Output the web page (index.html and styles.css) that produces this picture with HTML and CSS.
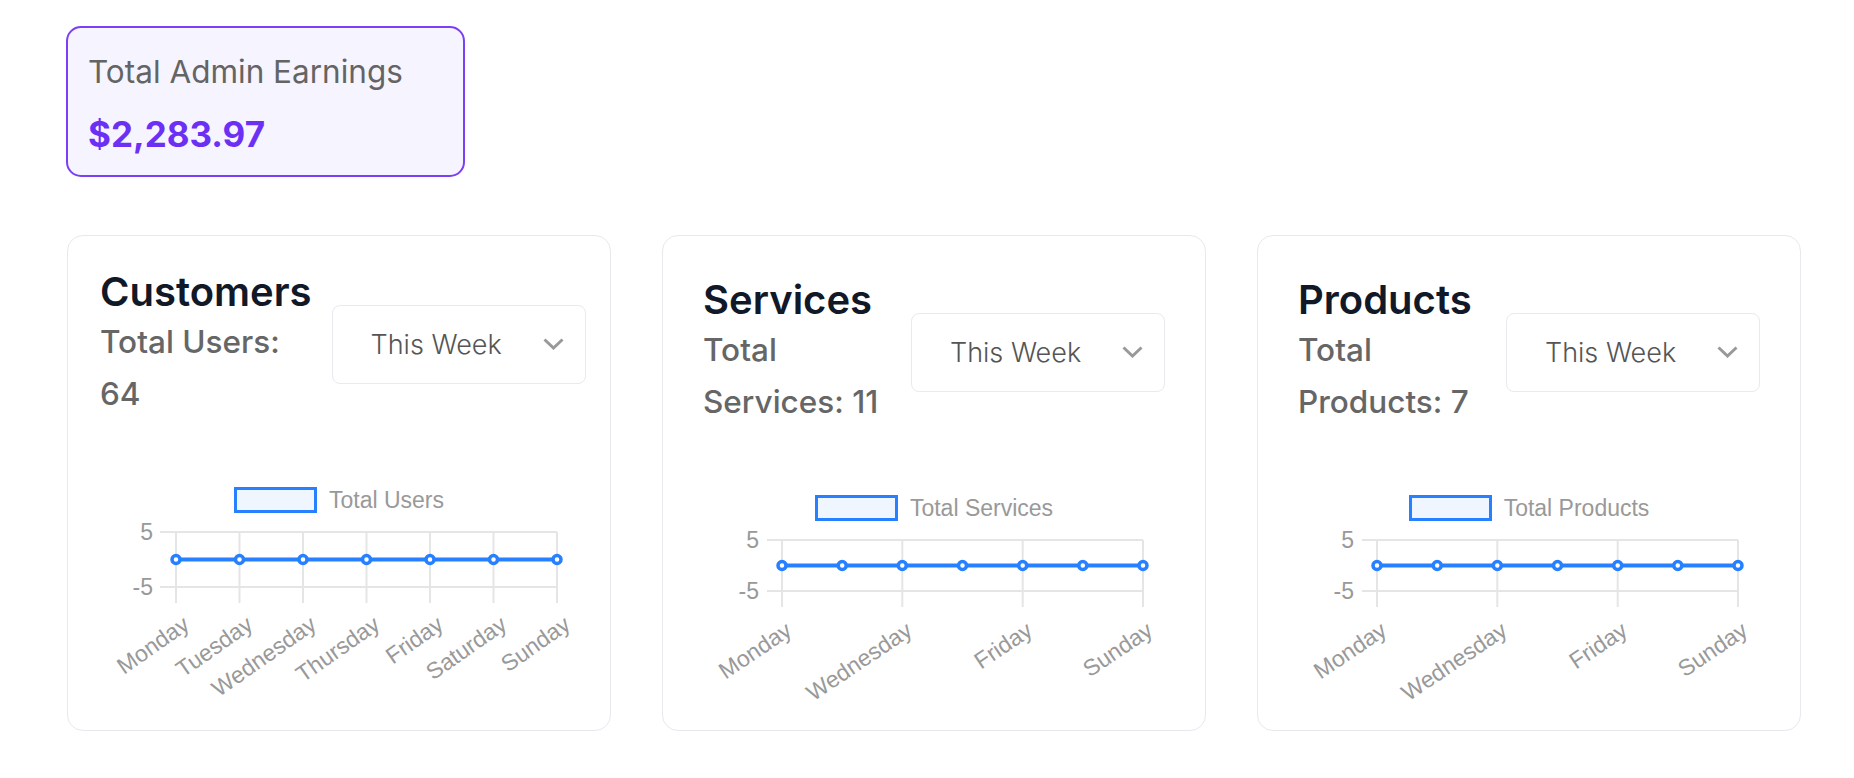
FILE: index.html
```html
<!DOCTYPE html>
<html lang="en">
<head>
  <meta charset="UTF-8">
  <title>Admin Dashboard</title>
  <meta name="viewport" content="width=device-width, initial-scale=1.0">
  <link rel="stylesheet" href="styles.css">
</head>
<body>

  <main class="dashboard">

    <!-- Earnings -->
    <div class="earnings-card">
      <p class="earnings-label">Total Admin Earnings</p>
      <p class="earnings-value">$2,283.97</p>
    </div>

    <section class="stats-grid">

      <!-- Customers -->
      <div class="stat-card stat-card--compact">
        <div class="stat-head">
          <div class="stat-info">
            <h2>Customers</h2>
            <p class="stat-total">Total Users: 64</p>
          </div>
          <div class="period-select">
            <select>
              <option>This Week</option>
              <option>This Month</option>
              <option>This Year</option>
            </select>
            <svg class="chevron" viewBox="0 0 21 12"><polyline points="1.5,1.5 10.5,10 19.5,1.5"/></svg>
          </div>
        </div>
        <div class="chart-legend"><span class="legend-box"></span><span>Total Users</span></div>
        <svg class="chart" width="478" height="130">
          <text class="tick-y" x="53" y="19">5</text>
          <text class="tick-y" x="53" y="74">-5</text>
          <line class="grid" x1="60" y1="19" x2="457" y2="19"/>
          <line class="grid" x1="60" y1="74" x2="457" y2="74"/>
          <line class="grid" x1="76" y1="19" x2="76" y2="90"/>
          <line class="grid" x1="139.5" y1="19" x2="139.5" y2="90"/>
          <line class="grid" x1="203" y1="19" x2="203" y2="90"/>
          <line class="grid" x1="266.5" y1="19" x2="266.5" y2="90"/>
          <line class="grid" x1="330" y1="19" x2="330" y2="90"/>
          <line class="grid" x1="393.5" y1="19" x2="393.5" y2="90"/>
          <line class="grid" x1="457" y1="19" x2="457" y2="90"/>
          <line class="data-line" x1="76" y1="46.5" x2="457" y2="46.5"/>
          <circle class="point" cx="76" cy="46.5" r="4"/>
          <circle class="point" cx="139.5" cy="46.5" r="4"/>
          <circle class="point" cx="203" cy="46.5" r="4"/>
          <circle class="point" cx="266.5" cy="46.5" r="4"/>
          <circle class="point" cx="330" cy="46.5" r="4"/>
          <circle class="point" cx="393.5" cy="46.5" r="4"/>
          <circle class="point" cx="457" cy="46.5" r="4"/>
          <text class="tick-x" transform="translate(87.5 110) rotate(-35)">Monday</text>
          <text class="tick-x" transform="translate(151 110) rotate(-35)">Tuesday</text>
          <text class="tick-x" transform="translate(214.5 110) rotate(-35)">Wednesday</text>
          <text class="tick-x" transform="translate(278 110) rotate(-35)">Thursday</text>
          <text class="tick-x" transform="translate(341.5 110) rotate(-35)">Friday</text>
          <text class="tick-x" transform="translate(405 110) rotate(-35)">Saturday</text>
          <text class="tick-x" transform="translate(468.5 110) rotate(-35)">Sunday</text>
        </svg>
      </div>

      <!-- Services -->
      <div class="stat-card">
        <div class="stat-head">
          <div class="stat-info">
            <h2>Services</h2>
            <p class="stat-total">Total <span class="keep">Services: 11</span></p>
          </div>
          <div class="period-select">
            <select>
              <option>This Week</option>
              <option>This Month</option>
              <option>This Year</option>
            </select>
            <svg class="chevron" viewBox="0 0 21 12"><polyline points="1.5,1.5 10.5,10 19.5,1.5"/></svg>
          </div>
        </div>
        <div class="chart-legend"><span class="legend-box"></span><span>Total Services</span></div>
        <svg class="chart" width="462" height="130">
          <text class="tick-y" x="56" y="19">5</text>
          <text class="tick-y" x="56" y="70">-5</text>
          <line class="grid" x1="64" y1="19" x2="440" y2="19"/>
          <line class="grid" x1="64" y1="70" x2="440" y2="70"/>
          <line class="grid" x1="79" y1="19" x2="79" y2="86"/>
          <line class="grid" x1="199.3" y1="19" x2="199.3" y2="86"/>
          <line class="grid" x1="319.7" y1="19" x2="319.7" y2="86"/>
          <line class="grid" x1="440" y1="19" x2="440" y2="86"/>
          <line class="data-line" x1="79" y1="44.5" x2="440" y2="44.5"/>
          <circle class="point" cx="79" cy="44.5" r="4"/>
          <circle class="point" cx="139.2" cy="44.5" r="4"/>
          <circle class="point" cx="199.3" cy="44.5" r="4"/>
          <circle class="point" cx="259.5" cy="44.5" r="4"/>
          <circle class="point" cx="319.7" cy="44.5" r="4"/>
          <circle class="point" cx="379.8" cy="44.5" r="4"/>
          <circle class="point" cx="440" cy="44.5" r="4"/>
          <text class="tick-x" transform="translate(87 108) rotate(-34)">Monday</text>
          <text class="tick-x" transform="translate(207.3 108) rotate(-34)">Wednesday</text>
          <text class="tick-x" transform="translate(327.7 108) rotate(-34)">Friday</text>
          <text class="tick-x" transform="translate(448 108) rotate(-34)">Sunday</text>
        </svg>
      </div>

      <!-- Products -->
      <div class="stat-card">
        <div class="stat-head">
          <div class="stat-info">
            <h2>Products</h2>
            <p class="stat-total">Total <span class="keep">Products: 7</span></p>
          </div>
          <div class="period-select">
            <select>
              <option>This Week</option>
              <option>This Month</option>
              <option>This Year</option>
            </select>
            <svg class="chevron" viewBox="0 0 21 12"><polyline points="1.5,1.5 10.5,10 19.5,1.5"/></svg>
          </div>
        </div>
        <div class="chart-legend"><span class="legend-box"></span><span>Total Products</span></div>
        <svg class="chart" width="462" height="130">
          <text class="tick-y" x="56" y="19">5</text>
          <text class="tick-y" x="56" y="70">-5</text>
          <line class="grid" x1="64" y1="19" x2="440" y2="19"/>
          <line class="grid" x1="64" y1="70" x2="440" y2="70"/>
          <line class="grid" x1="79" y1="19" x2="79" y2="86"/>
          <line class="grid" x1="199.3" y1="19" x2="199.3" y2="86"/>
          <line class="grid" x1="319.7" y1="19" x2="319.7" y2="86"/>
          <line class="grid" x1="440" y1="19" x2="440" y2="86"/>
          <line class="data-line" x1="79" y1="44.5" x2="440" y2="44.5"/>
          <circle class="point" cx="79" cy="44.5" r="4"/>
          <circle class="point" cx="139.2" cy="44.5" r="4"/>
          <circle class="point" cx="199.3" cy="44.5" r="4"/>
          <circle class="point" cx="259.5" cy="44.5" r="4"/>
          <circle class="point" cx="319.7" cy="44.5" r="4"/>
          <circle class="point" cx="379.8" cy="44.5" r="4"/>
          <circle class="point" cx="440" cy="44.5" r="4"/>
          <text class="tick-x" transform="translate(87 108) rotate(-34)">Monday</text>
          <text class="tick-x" transform="translate(207.3 108) rotate(-34)">Wednesday</text>
          <text class="tick-x" transform="translate(327.7 108) rotate(-34)">Friday</text>
          <text class="tick-x" transform="translate(448 108) rotate(-34)">Sunday</text>
        </svg>
      </div>

    </section>
  </main>

</body>
</html>
```

FILE: styles.css
```css
* {
  box-sizing: border-box;
}
body {
  margin: 0;
  background-color: #fff;
  font-family: Inter, "Noto Sans", sans-serif;
}
.dashboard {
  padding: 26px 53px 40px 66px;
}

/* earnings */
.earnings-card {
  width: 399px;
  height: 151px;
  padding: 20px 20px 0;
  border: 2px solid #7b3ff4;
  border-radius: 15px;
  background-color: #f6f4ff;
}
.earnings-label {
  margin: 0;
  font-size: 31.5px;
  line-height: 48px;
  color: #646464;
}
.earnings-value {
  margin: 12px 0 0;
  font-size: 35px;
  line-height: 52px;
  font-weight: 700;
  color: #6c30f5;
}

/* stat cards */
.stats-grid {
  display: grid;
  grid-template-columns: repeat(3, minmax(0, 1fr));
  gap: 51px;
  margin-top: 58px;
  margin-left: 1px;
}
.stat-card {
  height: 496px;
  padding: 40px;
  border: 1px solid #e8e8ef;
  border-radius: 16px;
  background-color: #fff;
}
.stat-card--compact {
  padding: 32px;
}
.stat-head {
  display: flex;
  align-items: center;
  gap: 20px;
}
.stat-info {
  flex: 1 1 auto;
}
.stat-info h2 {
  margin: 0;
  font-size: 40px;
  line-height: 48px;
  font-weight: 560;
  color: #111827;
}
.stat-total {
  margin: 0;
  font-size: 31.5px;
  line-height: 52px;
  font-weight: 530;
  color: #666;
}
.keep {
  white-space: nowrap;
}

.period-select {
  position: relative;
  flex: 0 0 254px;
  height: 79px;
}
.period-select select {
  width: 100%;
  height: 100%;
  padding: 0 0 0 38px;
  border: 1px solid #e9e9ef;
  border-radius: 8px;
  background-color: #fff;
  appearance: none;
  -webkit-appearance: none;
  font-family: Inter, "Noto Sans", sans-serif;
  font-size: 27px;
  font-weight: 350;
  color: #555;
}
.chevron {
  position: absolute;
  right: 22px;
  top: 50%;
  width: 21px;
  height: 12px;
  margin-top: -6px;
  pointer-events: none;
  fill: none;
  stroke: #999;
  stroke-width: 3;
}

/* charts */
.chart-legend {
  display: flex;
  justify-content: center;
  align-items: center;
  gap: 12px;
  height: 26px;
  margin-top: 67px;
  font-family: "Liberation Sans", Arial, sans-serif;
  font-size: 23px;
  line-height: 1;
  color: #999;
}
.legend-box {
  width: 83px;
  height: 26px;
  border: 3px solid #2680ff;
  background-color: #f0f6ff;
}
.chart {
  display: block;
  overflow: visible;
}
.chart text {
  font-family: "Liberation Sans", Arial, sans-serif;
  font-size: 23px;
  fill: #999;
}
.tick-y {
  text-anchor: end;
  dominant-baseline: central;
}
.tick-x {
  text-anchor: end;
  dominant-baseline: middle;
}
.grid {
  stroke: #e5e5e5;
  stroke-width: 2;
}
.data-line {
  stroke: #2680ff;
  stroke-width: 4;
}
.point {
  fill: #fff;
  stroke: #2680ff;
  stroke-width: 3.5;
}
```
